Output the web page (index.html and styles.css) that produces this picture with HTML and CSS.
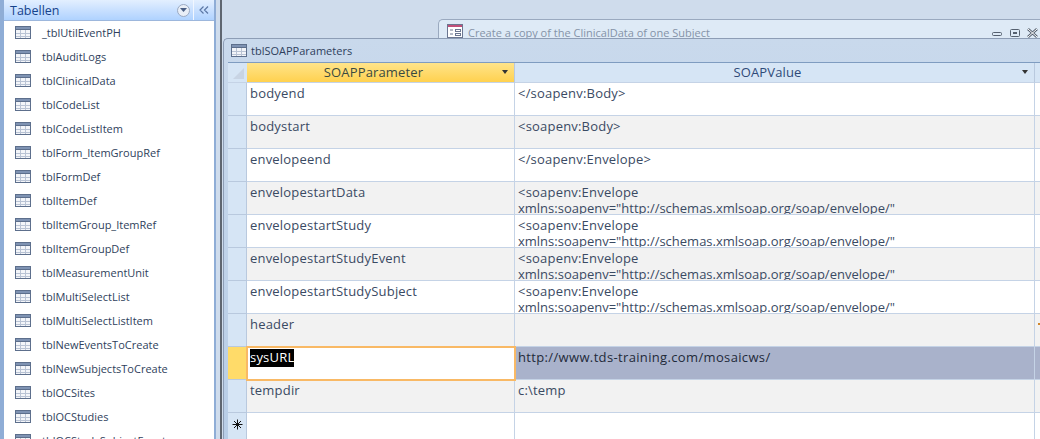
FILE: index.html
```html
<!DOCTYPE html>
<html>
<head>
    <meta charset="utf-8">
    <title>tblSOAPParameters</title>
    <link rel="stylesheet" href="styles.css">
</head>
<body>
<svg class="defs" width="0" height="0">
    <symbol id="tbl" viewBox="0 0 16 13">
        <rect x="0" y="0" width="16" height="13" fill="#5d6f8c"/>
        <rect x="1" y="1" width="14" height="2" fill="#7f93b3"/>
        <rect x="1" y="4" width="14" height="8" fill="#f3f5f9"/>
        <rect x="1" y="7" width="14" height="1" fill="#b9c3d4"/>
        <rect x="1" y="10" width="14" height="1" fill="#b9c3d4"/>
        <rect x="5" y="4" width="1" height="8" fill="#b9c3d4"/>
        <rect x="10" y="4" width="1" height="8" fill="#b9c3d4"/>
    </symbol>
</svg>
<div class="app">
    <aside class="nav">
        <div class="nav-head">
            <span class="nav-title">Tabellen</span>
            <span class="nav-drop"><svg width="7" height="4" viewBox="0 0 7 4"><path d="M0 0h7L3.5 4z" fill="#4a5f85"/></svg></span>
            <span class="nav-close"><svg width="10" height="8" viewBox="0 0 10 8"><path d="M4.500 .5 1 4l3.500 3.500M9 .5 5.500 4 9 7.500" fill="none" stroke="#5b77a5" stroke-width="1.200"/></svg></span>
        </div>
        <ul class="nav-list">
            <li><svg class="ico"><use href="#tbl"/></svg>_tblUtilEventPH</li>
            <li><svg class="ico"><use href="#tbl"/></svg>tblAuditLogs</li>
            <li><svg class="ico"><use href="#tbl"/></svg>tblClinicalData</li>
            <li><svg class="ico"><use href="#tbl"/></svg>tblCodeList</li>
            <li><svg class="ico"><use href="#tbl"/></svg>tblCodeListItem</li>
            <li><svg class="ico"><use href="#tbl"/></svg>tblForm_ItemGroupRef</li>
            <li><svg class="ico"><use href="#tbl"/></svg>tblFormDef</li>
            <li><svg class="ico"><use href="#tbl"/></svg>tblItemDef</li>
            <li><svg class="ico"><use href="#tbl"/></svg>tblItemGroup_ItemRef</li>
            <li><svg class="ico"><use href="#tbl"/></svg>tblItemGroupDef</li>
            <li><svg class="ico"><use href="#tbl"/></svg>tblMeasurementUnit</li>
            <li><svg class="ico"><use href="#tbl"/></svg>tblMultiSelectList</li>
            <li><svg class="ico"><use href="#tbl"/></svg>tblMultiSelectListItem</li>
            <li><svg class="ico"><use href="#tbl"/></svg>tblNewEventsToCreate</li>
            <li><svg class="ico"><use href="#tbl"/></svg>tblNewSubjectsToCreate</li>
            <li><svg class="ico"><use href="#tbl"/></svg>tblOCSites</li>
            <li><svg class="ico"><use href="#tbl"/></svg>tblOCStudies</li>
            <li><svg class="ico"><use href="#tbl"/></svg>tblOCStudySubjectEvent</li>
        </ul>
    </aside>
    <main class="workspace">
        <div class="back-win">
            <svg class="form-ico" width="16" height="14" viewBox="0 0 16 14">
                <rect x=".5" y=".5" width="15" height="13" fill="#fff" stroke="#6b7690"/>
                <rect x="1" y="1" width="14" height="2" fill="#c0507a"/>
                <path d="M3 6h3M3 10h3" stroke="#6b7690"/>
                <rect x="8.500" y="5.500" width="5" height="2" fill="none" stroke="#6b7690"/>
                <rect x="8.500" y="9.500" width="5" height="2" fill="none" stroke="#6b7690"/>
            </svg>
            <span class="back-title">Create a copy of the ClinicalData of one Subject</span>
            <svg class="win-btns" width="54" height="14" viewBox="0 0 54 14">
                <rect x="6.500" y="8.500" width="9" height="3" rx="1" fill="none" stroke="#55606f"/>
                <rect x="24.500" y="5.500" width="9" height="7" rx="1" fill="none" stroke="#55606f"/>
                <path d="M27 9h4" stroke="#55606f" stroke-width="2"/>
                <path d="M42 5l9 8M51 5l-9 8" stroke="#55606f" stroke-width="2.600"/>
                <path d="M42 5l9 8M51 5l-9 8" stroke="#fff" stroke-width="1"/>
            </svg>
        </div>
        <div class="front-win">
            <div class="front-title"><svg class="ico"><use href="#tbl"/></svg>tblSOAPParameters</div>
            <table class="sheet">
                <colgroup>
                    <col class="c-sel"><col class="c-param"><col class="c-value"><col>
                </colgroup>
                <thead>
                    <tr>
                        <th class="sel corner"><span class="tri"></span></th>
                        <th class="active">SOAPParameter<span class="arrow"></span></th>
                        <th>SOAPValue<span class="arrow"></span></th>
                        <th></th>
                    </tr>
                </thead>
                <tbody>
                    <tr>
                        <td class="sel"></td>
                        <td><div class="cell">bodyend</div></td>
                        <td><div class="cell">&lt;/soapenv:Body&gt;</div></td>
                        <td></td>
                    </tr>
                    <tr class="alt">
                        <td class="sel"></td>
                        <td><div class="cell">bodystart</div></td>
                        <td><div class="cell">&lt;soapenv:Body&gt;</div></td>
                        <td></td>
                    </tr>
                    <tr>
                        <td class="sel"></td>
                        <td><div class="cell">envelopeend</div></td>
                        <td><div class="cell">&lt;/soapenv:Envelope&gt;</div></td>
                        <td></td>
                    </tr>
                    <tr class="alt">
                        <td class="sel"></td>
                        <td><div class="cell">envelopestartData</div></td>
                        <td><div class="cell">&lt;soapenv:Envelope<br><span class="ns">xmlns:soapenv="http://schemas.xmlsoap.org/soap/envelope/"</span></div></td>
                        <td></td>
                    </tr>
                    <tr>
                        <td class="sel"></td>
                        <td><div class="cell">envelopestartStudy</div></td>
                        <td><div class="cell">&lt;soapenv:Envelope<br><span class="ns">xmlns:soapenv="http://schemas.xmlsoap.org/soap/envelope/"</span></div></td>
                        <td></td>
                    </tr>
                    <tr class="alt">
                        <td class="sel"></td>
                        <td><div class="cell">envelopestartStudyEvent</div></td>
                        <td><div class="cell">&lt;soapenv:Envelope<br><span class="ns">xmlns:soapenv="http://schemas.xmlsoap.org/soap/envelope/"</span></div></td>
                        <td></td>
                    </tr>
                    <tr>
                        <td class="sel"></td>
                        <td><div class="cell">envelopestartStudySubject</div></td>
                        <td><div class="cell">&lt;soapenv:Envelope<br><span class="ns">xmlns:soapenv="http://schemas.xmlsoap.org/soap/envelope/"</span></div></td>
                        <td></td>
                    </tr>
                    <tr class="alt">
                        <td class="sel"></td>
                        <td><div class="cell">header</div></td>
                        <td><div class="cell"></div></td>
                        <td><div class="cell"><span class="mark"></span></div></td>
                    </tr>
                    <tr class="current">
                        <td class="sel"></td>
                        <td class="focus"><div class="cell"><span class="picked">sysURL</span></div></td>
                        <td><div class="cell url">http://www.tds-training.com/mosaicws/</div></td>
                        <td></td>
                    </tr>
                    <tr class="alt">
                        <td class="sel"></td>
                        <td><div class="cell">tempdir</div></td>
                        <td><div class="cell">c:\temp</div></td>
                        <td></td>
                    </tr>
                    <tr class="new">
                        <td class="sel star">
                            <svg width="11" height="11" viewBox="0 0 11 11"><path d="M5.500 .5v10M.5 5.500h10M2 2l7 7M9 2l-7 7" stroke="#111" stroke-width="1"/></svg>
                        </td>
                        <td><div class="cell"></div></td>
                        <td><div class="cell"></div></td>
                        <td></td>
                    </tr>
                </tbody>
            </table>
        </div>
    </main>
</div>
</body>
</html>
```

FILE: styles.css
```css
html, body {
    margin: 0;
    height: 100%;
    overflow: hidden;
}
body {
    font: 13px "Open Sans", "Noto Sans", sans-serif;
    color: #3a4a63;
}
.defs {
    display: block;
    height: 0;
}
.app {
    display: flex;
    height: 439px;
    background: #cfdcec;
}
.ico {
    width: 16px;
    height: 13px;
    flex: none;
}

/* nav pane */
.nav {
    width: 210px;
    flex: none;
    border-left: 4px solid #8fadd6;
    border-right: 2px solid #8fadd6;
    background: #fff;
    overflow: hidden;
}
.nav-head {
    display: flex;
    align-items: center;
    height: 21px;
    box-sizing: border-box;
    border-bottom: 1px solid #9db7dc;
    background: linear-gradient(#e3efff, #afd2ff);
}
.nav-title {
    flex: 1;
    padding-left: 6px;
    font-size: 12.500px;
    color: #15428b;
}
.nav-drop {
    display: flex;
    align-items: center;
    justify-content: center;
    width: 11px;
    height: 11px;
    margin-right: 3px;
    border: 1px solid #9aa9c2;
    border-radius: 50%;
    background: #e8eef7;
}
.nav-close {
    display: flex;
    align-items: center;
    justify-content: center;
    width: 21px;
    height: 20px;
    box-sizing: border-box;
    border-left: 1px solid #f2f7ff;
}
.nav-list {
    margin: 0;
    padding: 0;
    list-style: none;
    font-size: 11px;
    color: #2f3f5c;
}
.nav-list li {
    display: flex;
    align-items: center;
    gap: 11px;
    height: 24px;
    box-sizing: border-box;
    padding: 0 0 2px 11px;
}

/* document area */
.workspace {
    flex: 1;
    min-width: 0;
    margin-left: 4px;
    padding-top: 19px;
    border-left: 2px solid #5f6670;
}
.back-win {
    display: flex;
    align-items: flex-start;
    gap: 5px;
    height: 19px;
    margin-left: 216px;
    padding: 4px 0 0 8px;
    border: 1px solid #9aa9bf;
    border-right: 0;
    border-bottom: 0;
    border-radius: 5px 0 0 0;
    background: #deeaf6;
    box-sizing: border-box;
    overflow: hidden;
}
.form-ico {
    flex: none;
}
.back-title {
    flex: 1;
    margin-top: 3px;
    font-size: 11px;
    line-height: 11px;
    color: #8593a8;
}
.win-btns {
    flex: none;
}
.front-win {
    margin-left: 1px;
    height: 401px;
    border-top: 1px solid #8d9db5;
    border-left: 1px solid #8d9db5;
    border-radius: 5px 0 0 0;
    background: linear-gradient(#c9d9ec, #b8cde6);
    box-sizing: border-box;
    padding-left: 4px;
}
.front-title {
    display: flex;
    align-items: center;
    gap: 4px;
    height: 24px;
    padding-left: 3px;
    font-size: 11px;
    color: #2f3f5c;
    box-sizing: border-box;
    border-bottom: 1px solid #7f9cc0;
}

/* datasheet */
.sheet {
    width: 813px;
    table-layout: fixed;
    border-collapse: separate;
    border-spacing: 0;
    background: #fff;
    font-size: 13px;
}
.c-sel { width: 19px; }
.c-param { width: 268px; }
.c-value { width: 520px; }
.sheet th {
    position: relative;
    height: 20px;
    padding: 0 14px 1px 0;
    box-sizing: border-box;
    font-weight: normal;
    font-size: 13px;
    line-height: 16px;
    letter-spacing: .15px;
    color: #2f4a78;
    background: #d6e5f5;
    border-right: 1px solid #b9c9de;
    border-bottom: 1px solid #c5d3e6;
}
.sheet th.active {
    color: #3a4a40;
    background: linear-gradient(#ffe48a, #ffd14f);
}
.sheet th.corner {
    border-right: 0;
}
.tri {
    position: absolute;
    right: 3px;
    bottom: 3px;
    border-style: solid;
    border-width: 0 0 11px 11px;
    border-color: transparent transparent #c8d4e4 transparent;
}
.arrow {
    position: absolute;
    right: 6px;
    top: 7px;
    border-style: solid;
    border-width: 4px 3.500px 0;
    border-color: #333 transparent transparent;
}
.sheet td {
    height: 32px;
    padding: 0;
    vertical-align: top;
    border-right: 1px solid #c5d3e6;
    border-bottom: 1px solid #c5d3e6;
}
.cell {
    height: 32px;
    padding: 2px 0 0 3px;
    box-sizing: border-box;
    overflow: hidden;
    line-height: 16px;
    white-space: nowrap;
    letter-spacing: .2px;
}
.ns {
    letter-spacing: 0;
}
.url {
    letter-spacing: .35px;
}
.alt td {
    background: #f2f2f2;
}
.sheet td.sel {
    background: #d6e5f5;
    border-right: 1px solid #b9c9de;
    border-bottom-color: #b9c9de;
}
.current td {
    background: #a9b2cb;
    color: #1f2a3a;
}
.current td.sel {
    background: #ffdb69;
}
.current td.focus {
    background: #fff;
    outline: 2px solid #f9b965;
    outline-offset: -1px;
    position: relative;
}
.picked {
    display: inline-block;
    height: 18px;
    background: #000;
    color: #fff;
}
.sheet td.star {
    padding-top: 6px;
    text-align: center;
    line-height: 0;
}
.mark {
    display: block;
    width: 3px;
    height: 2px;
    margin: 7px 0 0 0;
    background: #d0852a;
}
```
